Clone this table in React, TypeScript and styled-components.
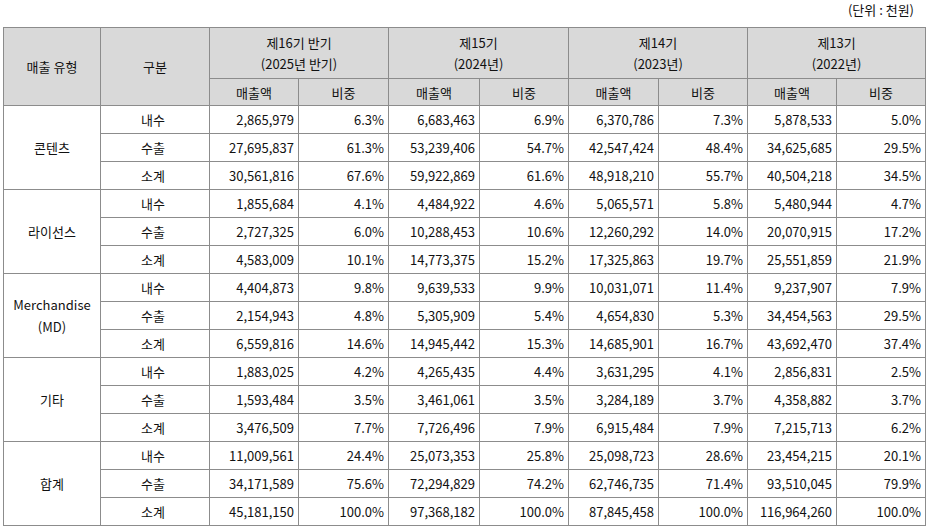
import styled, { createGlobalStyle } from "styled-components";

const GlobalStyle = createGlobalStyle`
    body {
        margin: 0;
        background: #fff;
        font-family: "Noto Sans CJK KR", "Noto Sans", sans-serif;
        color: #111;
    }
`;

const Wrapper = styled.div`
    width: 923px;
    padding-left: 3px;
`;
const Unit = styled.div`
    height: 27px;
    font-size: 13px;
    line-height: 17px;
    text-align: right;
    padding: 1px 12px 0 0;
    box-sizing: border-box;
`;
const Table = styled.table`
    width: 923px;
    border-collapse: collapse;
    table-layout: fixed;
    border: 1px solid #000;
    font-size: 13px;
`;
const HeadCell = styled.th<{ tall?: boolean }>`
    background: #d9d9d9;
    border: 1px solid #8c8c8c;
    font-weight: normal;
    text-align: center;
    height: ${(p) => (p.tall ? "50px" : "26px")};
    line-height: 21px;
    padding: 0;
`;
const Cell = styled.td<{ align?: "center" | "right" }>`
    border: 1px solid #8c8c8c;
    height: 27px;
    padding: 0 4px 0 0;
    text-align: ${(p) => p.align ?? "right"};
    line-height: 16px;
    white-space: nowrap;
`;
const GroupCell = styled.td`
    border: 1px solid #8c8c8c;
    text-align: center;
    padding: 0;
    line-height: 22px;
`;

type Row = [string, string, string, string, string, string, string, string, string];

const groups: { name: string[]; rows: Row[] }[] = [
    {
        name: ["콘텐츠"],
        rows: [
            ["내수", "2,865,979", "6.3%", "6,683,463", "6.9%", "6,370,786", "7.3%", "5,878,533", "5.0%"],
            ["수출", "27,695,837", "61.3%", "53,239,406", "54.7%", "42,547,424", "48.4%", "34,625,685", "29.5%"],
            ["소계", "30,561,816", "67.6%", "59,922,869", "61.6%", "48,918,210", "55.7%", "40,504,218", "34.5%"],
        ],
    },
    {
        name: ["라이선스"],
        rows: [
            ["내수", "1,855,684", "4.1%", "4,484,922", "4.6%", "5,065,571", "5.8%", "5,480,944", "4.7%"],
            ["수출", "2,727,325", "6.0%", "10,288,453", "10.6%", "12,260,292", "14.0%", "20,070,915", "17.2%"],
            ["소계", "4,583,009", "10.1%", "14,773,375", "15.2%", "17,325,863", "19.7%", "25,551,859", "21.9%"],
        ],
    },
    {
        name: ["Merchandise", "(MD)"],
        rows: [
            ["내수", "4,404,873", "9.8%", "9,639,533", "9.9%", "10,031,071", "11.4%", "9,237,907", "7.9%"],
            ["수출", "2,154,943", "4.8%", "5,305,909", "5.4%", "4,654,830", "5.3%", "34,454,563", "29.5%"],
            ["소계", "6,559,816", "14.6%", "14,945,442", "15.3%", "14,685,901", "16.7%", "43,692,470", "37.4%"],
        ],
    },
    {
        name: ["기타"],
        rows: [
            ["내수", "1,883,025", "4.2%", "4,265,435", "4.4%", "3,631,295", "4.1%", "2,856,831", "2.5%"],
            ["수출", "1,593,484", "3.5%", "3,461,061", "3.5%", "3,284,189", "3.7%", "4,358,882", "3.7%"],
            ["소계", "3,476,509", "7.7%", "7,726,496", "7.9%", "6,915,484", "7.9%", "7,215,713", "6.2%"],
        ],
    },
    {
        name: ["합계"],
        rows: [
            ["내수", "11,009,561", "24.4%", "25,073,353", "25.8%", "25,098,723", "28.6%", "23,454,215", "20.1%"],
            ["수출", "34,171,589", "75.6%", "72,294,829", "74.2%", "62,746,735", "71.4%", "93,510,045", "79.9%"],
            ["소계", "45,181,150", "100.0%", "97,368,182", "100.0%", "87,845,458", "100.0%", "116,964,260", "100.0%"],
        ],
    },
];

const periods = [
    ["제16기 반기", "(2025년 반기)"],
    ["제15기", "(2024년)"],
    ["제14기", "(2023년)"],
    ["제13기", "(2022년)"],
];

const widths = [97, 109, 89, 90, 91, 89, 90, 89, 89, 89];

function App() {
    return (
        <>
            <GlobalStyle />
            <Wrapper>
                <Unit>(단위 : 천원)</Unit>
                <Table>
                    <colgroup>
                        {widths.map((w, i) => (
                            <col key={i} style={{ width: w }} />
                        ))}
                    </colgroup>
                    <thead>
                        <tr>
                            <HeadCell tall rowSpan={2}>매출 유형</HeadCell>
                            <HeadCell tall rowSpan={2}>구분</HeadCell>
                            {periods.map((p) => (
                                <HeadCell tall colSpan={2} key={p[0]}>
                                    {p[0]}
                                    <br />
                                    {p[1]}
                                </HeadCell>
                            ))}
                        </tr>
                        <tr>
                            {periods.map((p) => [
                                <HeadCell key={p[0] + "a"}>매출액</HeadCell>,
                                <HeadCell key={p[0] + "b"}>비중</HeadCell>,
                            ])}
                        </tr>
                    </thead>
                    <tbody>
                        {groups.map((g) =>
                            g.rows.map((r, i) => (
                                <tr key={g.name[0] + r[0]}>
                                    {i === 0 && (
                                        <GroupCell rowSpan={3}>
                                            {g.name.map((n, j) => (
                                                <div key={j}>{n}</div>
                                            ))}
                                        </GroupCell>
                                    )}
                                    <Cell align="center">{r[0]}</Cell>
                                    {r.slice(1).map((v, k) => (
                                        <Cell key={k}>{v}</Cell>
                                    ))}
                                </tr>
                            ))
                        )}
                    </tbody>
                </Table>
            </Wrapper>
        </>
    );
}
export default App;
